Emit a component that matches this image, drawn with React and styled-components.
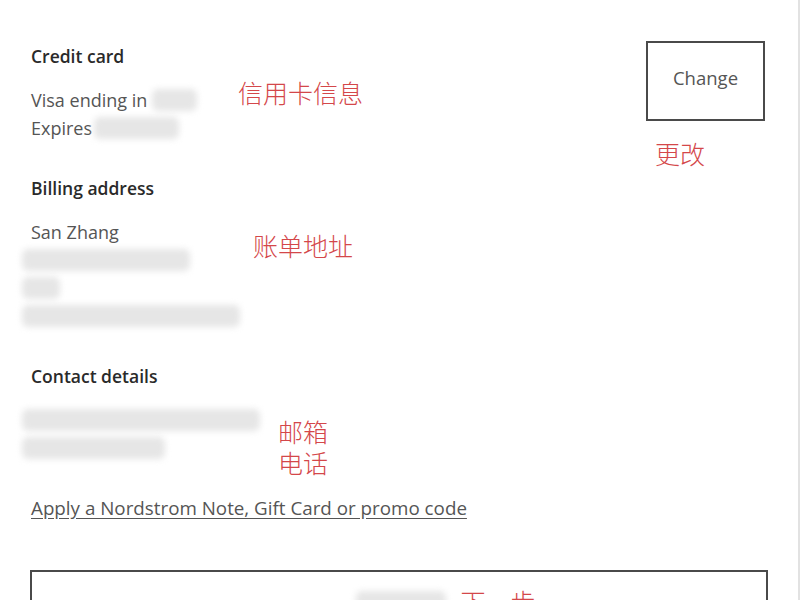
import React from 'react';
import styled, { createGlobalStyle } from 'styled-components';

const GlobalStyle = createGlobalStyle`
  html, body {
    margin: 0;
    padding: 0;
    background: #ffffff;
  }
`;

const Page = styled.div`
  box-sizing: border-box;
  width: 800px;
  height: 600px;
  overflow: hidden;
  background: #fff;
  border-right: 2px solid #e2e2e2;
  padding: 41px 33px 0 31px;
  font-family: "Open Sans", "Noto Sans", sans-serif;
  color: #555;
`;

const TopRow = styled.div`
  display: flex;
  justify-content: space-between;
  align-items: flex-start;
`;

const Section = styled.section`
  display: flex;
  flex-direction: column;
  margin-top: ${(p) => p.$top || 0}px;
`;

const Heading = styled.h2`
  margin: 0 0 18px;
  font-size: 17.5px;
  line-height: 24px;
  font-weight: 600;
  color: #2a2a2a;
`;

const DetailRow = styled.div`
  display: flex;
  align-items: flex-start;
`;

const Lines = styled.div`
  width: ${(p) => p.$w}px;
  flex-shrink: 0;
`;

const Line = styled.div`
  display: flex;
  align-items: center;
  height: 28px;
  font-size: 18px;
  white-space: nowrap;
`;

const Blur = styled.span`
  display: inline-block;
  width: ${(p) => p.$w}px;
  height: ${(p) => p.$h || 22}px;
  margin-left: ${(p) => p.$ml || 0}px;
  background: #e6e6e6;
  border-radius: 6px;
  filter: blur(3px);
`;

const Note = styled.div`
  margin-top: ${(p) => p.$mt || 0}px;
  margin-left: ${(p) => p.$ml || 0}px;
  font-family: "Noto Sans CJK SC", sans-serif;
  font-size: 25px;
  font-weight: 300;
  line-height: ${(p) => p.$lh || 32}px;
  color: #d4474a;
  white-space: nowrap;
`;

const ChangeCol = styled.div`
  display: flex;
  flex-direction: column;
  align-items: flex-start;
`;

const ChangeButton = styled.button`
  box-sizing: border-box;
  width: 119px;
  height: 80px;
  padding: 0 0 8px;
  border: 2px solid #4a4a4a;
  background: #fff;
  font-family: "Open Sans", "Noto Sans", sans-serif;
  font-size: 18.5px;
  color: #555;
  cursor: pointer;
`;

const PromoLink = styled.a`
  display: block;
  margin-top: 16px;
  font-size: 18.8px;
  line-height: 28px;
  color: #555;
  text-decoration: underline;
  text-underline-offset: 3px;
`;

const NextButton = styled.button`
  box-sizing: border-box;
  display: flex;
  align-items: center;
  justify-content: center;
  gap: 14px;
  width: 738px;
  height: 62px;
  margin: 48px 0 0 -1px;
  padding: 0 0 0 94px;
  border: 2px solid #4a4a4a;
  background: #fff;
  cursor: pointer;
`;

export default function App() {
  return (
    <Page>
      <GlobalStyle />
      <TopRow>
        <Section $top={3}>
          <Heading>Credit card</Heading>
          <DetailRow>
            <Lines $w={207}>
              <Line>
                Visa ending in
                <Blur $w={45} $ml={5} />
              </Line>
              <Line>
                Expires
                <Blur $w={85} $ml={2} />
              </Line>
            </Lines>
            <Note $mt={-10}>信用卡信息</Note>
          </DetailRow>
        </Section>
        <ChangeCol>
          <ChangeButton>Change</ChangeButton>
          <Note $mt={16} $ml={9}>更改</Note>
        </ChangeCol>
      </TopRow>

      <Section $top={7}>
        <Heading>Billing address</Heading>
        <DetailRow>
          <Lines $w={222}>
            <Line>San Zhang</Line>
            <Line>
              <Blur $w={168} $ml={-9} />
            </Line>
            <Line>
              <Blur $w={38} $ml={-9} />
            </Line>
            <Line>
              <Blur $w={218} $ml={-9} />
            </Line>
          </Lines>
          <Note $mt={11}>账单地址</Note>
        </DetailRow>
      </Section>

      <Section $top={34}>
        <Heading>Contact details</Heading>
        <DetailRow>
          <Lines $w={247}>
            <Line>
              <Blur $w={238} $ml={-9} />
            </Line>
            <Line>
              <Blur $w={143} $ml={-9} />
            </Line>
          </Lines>
          <Note $mt={10} $lh={31}>
            邮箱
            <br />
            电话
          </Note>
        </DetailRow>
      </Section>

      <PromoLink href="#">Apply a Nordstrom Note, Gift Card or promo code</PromoLink>

      <NextButton>
        <Blur $w={90} $h={20} />
        <Note>下一步</Note>
      </NextButton>
    </Page>
  );
}
